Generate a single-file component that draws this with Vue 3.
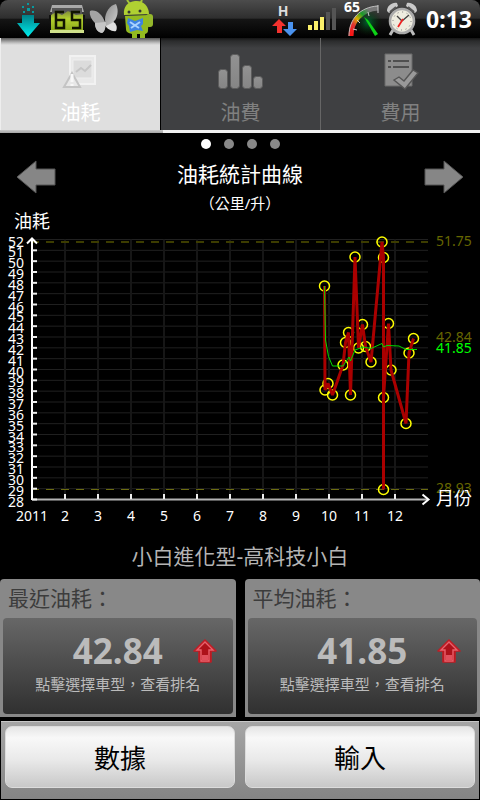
<script setup>
import { ref } from 'vue'

const tabs = [
  { id: 'usage', label: '油耗' },
  { id: 'fuelCost', label: '油費' },
  { id: 'cost', label: '費用' }
]
const activeTab = ref('usage')
const page = ref(0)

const axis = { left: 32, right: 428, top: 239.5, bottom: 499.5, min: 28, max: 52, monthWidth: 33 }
const yOf = (v) => axis.bottom - ((v - axis.min) * (axis.bottom - axis.top)) / (axis.max - axis.min)
const levels = Array.from({ length: 25 }, (_, i) => axis.max - i)
const months = Array.from({ length: 12 }, (_, i) => ({
  label: i === 0 ? '2011' : String(i + 1),
  x: axis.left + i * axis.monthWidth
}))

const samples = [
  [324.5, 286], [325, 390], [328, 383.5], [332.5, 395], [343, 365], [345.5, 342.5],
  [348.5, 332.5], [350.5, 395], [355, 257], [358.5, 348], [362.5, 324.5], [365.5, 346.5],
  [371, 362], [382, 242], [383.5, 257.5], [383.5, 489.5], [383.5, 397.5], [388.5, 323.5],
  [391, 370], [406, 423.5], [409, 353], [413.5, 338.5]
]
const averages = [
  [324.5, 286], [325.5, 340], [328.5, 356.5], [332.5, 366], [343, 366], [349, 357],
  [350.5, 361], [355, 350], [363, 347], [371, 348.5], [382, 343.5], [383.5, 347],
  [387, 345.5], [399, 346], [406, 349.5], [417, 349.5]
]
const toPoints = (list) => list.map((p) => p.join(',')).join(' ')

const cards = [
  { title: '最近油耗：', value: '42.84' },
  { title: '平均油耗：', value: '41.85' }
]
</script>

<template>
  <main class="app">
    <header class="status">
      <div class="status-left">
        <svg class="s-down" viewBox="0 0 24 36" width="24" height="36" aria-hidden="true">
          <defs>
            <linearGradient id="teal" x1="0" y1="0" x2="0" y2="1">
              <stop offset="0" stop-color="#008088" /><stop offset="1" stop-color="#00f0f0" />
            </linearGradient>
          </defs>
          <path fill="#079aa0" d="M11 2h2v2h-2zM6 5h2v2H6zM16 5h2v2h-2zM11 7h3v3h-3zM7 10h2v2H7zM16 10h2v2h-2z" />
          <path fill="url(#teal)" d="M6 14h12v8h6L12 36 1 22h5z" />
        </svg>
        <svg class="s-meter" viewBox="0 0 36 30" width="36" height="30" aria-hidden="true">
          <defs>
            <linearGradient id="meter" x1="0" y1="0" x2="0" y2="1">
              <stop offset="0" stop-color="#7e8b3a" /><stop offset=".4" stop-color="#b2cf2e" /><stop offset="1" stop-color="#8fae1c" />
            </linearGradient>
          </defs>
          <path d="M3 1h30l2 7H1z" fill="#a9a9a9" />
          <path d="M3 4h30v7H3z" fill="#555" />
          <path d="M2 11l5-3 6 3 6-4 8 4 7-1v16H2z" fill="url(#meter)" />
          <path d="M1 26h34v3H1z" fill="#cfe08a" />
          <path d="M0 11h2v6H0zM34 11h2v6h-2z" fill="#111" />
          <path d="M15 8H7v16h8v-8H7M31 8h-8v8h8v8h-8" fill="none" stroke="#101400" stroke-width="2.5" />
        </svg>
        <svg class="s-fly" viewBox="0 0 30 32" width="30" height="32" aria-hidden="true">
          <defs>
            <linearGradient id="wing" x1="0" y1="0" x2="1" y2="1">
              <stop offset="0" stop-color="#8a8a8a" /><stop offset="1" stop-color="#d0d0d0" />
            </linearGradient>
          </defs>
          <path d="M15 19l7-1c5 1 7 6 5 10-4 1-9-2-12-7z" fill="#e0e0e0" />
          <path d="M16 17C16 9 21 2 27 1c3 6 2 15-4 19l-6 3z" fill="url(#wing)" />
          <path d="M1 8c6-2 12 3 15 11 1 5 0 9-3 11-5-1-7-5-7-10C3 17 0 12 1 8z" fill="#a4a4a4" />
          <path d="M6 20l10-1c1 5 0 9-3 11-5-1-7-5-7-10z" fill="#c6c6c6" />
        </svg>
        <svg class="s-droid" viewBox="0 0 32 38" width="32" height="38" aria-hidden="true">
          <path d="M4 0l3 4M19 0l-2 4" stroke="#a4c639" stroke-width="2" />
          <path d="M1 15C0 6 5 2 12 1c8-1 14 5 14 13z" fill="#b0d032" />
          <circle cx="6" cy="12" r="1.5" fill="#333" /><circle cx="17" cy="11" r="1.5" fill="#333" />
          <rect x="23" y="14" width="7" height="13" rx="3" fill="#94b72b" />
          <path d="M2 16l24-1-1 15c0 3-1 3-3 4v4h-5v-4h-3v4H9v-4c-4-1-6-2-6-5z" fill="#93ba20" />
          <path d="M5 18l7 3 8-3v6l-2 2 2 5-6-1-7 2-1-6-2-3z" fill="#3f83e0" />
          <path d="M7 22l9 6M17 22l-9 6" stroke="#a9d2ff" stroke-width="2" />
        </svg>
      </div>
      <div class="status-right">
        <svg class="s-data" viewBox="0 0 26 34" width="26" height="34" aria-hidden="true">
          <text x="11" y="14" class="net">H</text>
          <path d="M7 17l7 7h-4v7H5v-7H0z" fill="#f3322e" />
          <path d="M18 34l7-7h-4v-7h-5v7h-5z" fill="#4a92ee" />
        </svg>
        <svg class="s-signal" viewBox="0 0 28 22" width="28" height="22" aria-hidden="true">
          <path d="M0 17h4v5H0zM6 13h4v9H6zM12 9h4v13h-4z" fill="#fbf06a" />
          <path d="M18 4h4v18h-4zM24 0h4v22h-4z" fill="#555" />
        </svg>
        <svg class="s-gauge" viewBox="0 0 36 38" width="36" height="38" aria-hidden="true">
          <defs>
            <linearGradient id="dial" x1="0" y1="1" x2="1" y2="0">
              <stop offset="0" stop-color="#f11" /><stop offset=".25" stop-color="#d33" />
              <stop offset=".42" stop-color="#d8b000" /><stop offset=".6" stop-color="#1a9a2a" />
              <stop offset=".8" stop-color="#777" />
            </linearGradient>
            <radialGradient id="glow"><stop offset="0" stop-color="#063" /><stop offset="1" stop-color="#062400" stop-opacity="0" /></radialGradient>
          </defs>
          <circle cx="24" cy="22" r="14" fill="url(#glow)" />
          <path d="M7 36C7 22 17 9 34 8" fill="none" stroke="url(#dial)" stroke-width="5" />
          <path d="M5 36C5 19 16 7 34 6" fill="none" stroke="#bbb" stroke-width="1" />
          <path d="M9 29l4 1M13 20l3 3M24 12l1 4M34 5v8" stroke="#ccc" stroke-width="1" />
          <path d="M20 17l4 3 10 14-3 2z" fill="#0dd317" />
          <text x="0" y="12" class="gauge-num">65</text>
        </svg>
        <svg class="s-clock" viewBox="0 0 32 34" width="32" height="34" aria-hidden="true">
          <path d="M7 28l-3 5M25 28l3 5" stroke="#bbb" stroke-width="3" />
          <path d="M1 9c0-5 5-9 10-8l1 3-9 7zM31 9c0-5-5-9-10-8l-1 3 9 7z" fill="#c9c9c9" />
          <path d="M10 5l-6 5M22 5l6 5" stroke="#555" stroke-width="2" />
          <circle cx="16" cy="19" r="12" fill="#eeecdf" stroke="#aaa" stroke-width="2.6" />
          <circle cx="16" cy="19" r="9" fill="none" stroke="#777" stroke-dasharray="1 3.7" />
          <path d="M16 19l7-6M16 19l-5-5" stroke="#444" stroke-width="1.4" />
          <path d="M17 17l-5 8" stroke="#e22" stroke-width="1.8" />
        </svg>
        <time class="clock">0:13</time>
      </div>
    </header>

    <nav class="tabs">
      <button
        v-for="tab in tabs"
        :key="tab.id"
        type="button"
        class="tab"
        :class="{ active: activeTab === tab.id }"
        @click="activeTab = tab.id"
      >
        <svg v-if="tab.id === 'usage'" class="tab-icon" viewBox="0 0 48 40" width="48" height="40" aria-hidden="true">
          <path d="M13 4h25v28H13z" fill="#e9e9e9" stroke="#f2f2f2" stroke-width="2" />
          <path d="M16 8h19v18H16z" fill="#dcdcdc" stroke="#eee" />
          <path d="M19 20l5-4 4 3 6-6" fill="none" stroke="#c6c6c6" stroke-width="2" />
          <path d="M7 35l8-14 8 14z" fill="#e8e8e8" stroke="#c4c4c4" stroke-width="2" />
          <path d="M15 22v8M15 32v2" stroke="#f8f8f8" stroke-width="3" />
        </svg>
        <svg v-else-if="tab.id === 'fuelCost'" class="tab-icon" viewBox="0 0 48 40" width="48" height="40" aria-hidden="true">
          <defs>
            <linearGradient id="bars" x1="0" y1="0" x2="0" y2="1">
              <stop offset="0" stop-color="#929292" /><stop offset="1" stop-color="#858585" />
            </linearGradient>
          </defs>
          <g fill="url(#bars)" stroke="#5c5c5c" stroke-width="1">
            <rect x="1.5" y="17.5" width="9" height="19" rx="3" />
            <rect x="13.5" y="2.5" width="9" height="34" rx="3" />
            <rect x="25.5" y="13.5" width="9" height="23" rx="3" />
            <rect x="36.5" y="24.5" width="9" height="12" rx="3" />
          </g>
        </svg>
        <svg v-else class="tab-icon" viewBox="0 0 48 40" width="48" height="40" aria-hidden="true">
          <path d="M8 2h27v32H8z" fill="#8c8c8c" stroke="#6a6a6a" />
          <path d="M11 9h3M16 9h16M11 15h3M16 15h16" stroke="#505050" stroke-width="2" />
          <path d="M17 28l5-3 5 4 9-11 5 3-13 16z" fill="#999" stroke="#555" stroke-width="1.4" />
        </svg>
        <span>{{ tab.label }}</span>
      </button>
    </nav>
    <div class="strip"><i></i></div>

    <div class="pager">
      <button
        v-for="n in 4"
        :key="n"
        type="button"
        class="dot"
        :class="{ on: page === n - 1 }"
        :aria-label="`${n}`"
        @click="page = n - 1"
      ></button>
    </div>

    <section class="heading">
      <button type="button" class="step" aria-label="‹">
        <svg viewBox="0 0 40 34" width="40" height="34"><path d="M1 17L20 1v8h19v16H20v8z" fill="#868686" stroke="#555" /></svg>
      </button>
      <div>
        <h1>油耗統計曲線</h1>
        <p>（公里/升）</p>
      </div>
      <button type="button" class="step" aria-label="›">
        <svg viewBox="0 0 40 34" width="40" height="34"><path d="M39 17L20 1v8H1v16h19v8z" fill="#868686" stroke="#555" /></svg>
      </button>
    </section>

    <svg class="chart" viewBox="0 205 480 325" role="img" aria-label="油耗統計曲線">
      <g class="grid-h">
        <line v-for="v in levels.slice(0, -1)" :key="v" :x1="axis.left" :x2="axis.right" :y1="yOf(v)" :y2="yOf(v)" />
      </g>
      <g class="grid-v">
        <line v-for="m in months.slice(1)" :key="m.label" :x1="m.x" :x2="m.x" :y1="axis.top" :y2="axis.bottom" />
      </g>
      <line class="limit high" x1="31" x2="428" y1="242" y2="242" />
      <line class="limit" x1="31" x2="428" y1="489.5" y2="489.5" />

      <line class="x-axis" :x1="axis.left" x2="428" y1="499.5" y2="499.5" />
      <path class="axis-tip" d="M422.5 494.5l6 5-6 5" />
      <line class="y-axis" x1="32" x2="32" y1="239" y2="500" />
      <path class="axis-tip" d="M27 243.5l5-5 5 5" />
      <g class="ticks">
        <line v-for="v in levels.slice(1)" :key="v" x1="32" x2="37" :y1="yOf(v)" :y2="yOf(v)" />
        <line v-for="m in months.slice(1)" :key="m.label" :x1="m.x" :x2="m.x" y1="494" y2="499" />
      </g>

      <text v-for="v in levels" :key="v" class="num" text-anchor="end" x="24" :y="yOf(v) + 7">{{ v }}</text>
      <text v-for="m in months" :key="m.label" class="num" text-anchor="middle" :x="m.x" y="521">{{ m.label }}</text>

      <circle v-for="(p, i) in samples" :key="i" class="mark" :cx="p[0]" :cy="p[1]" r="5" />
      <polyline class="usage" :points="toPoints(samples)" />
      <polyline class="average" :points="toPoints(averages)" />

      <text class="num olive" x="436" y="246">51.75</text>
      <text class="num olive" x="436" y="342">42.84</text>
      <text class="num lime" x="436" y="353">41.85</text>
      <text class="num olive" x="436" y="493">28.93</text>
      <text class="axis-name" x="14" y="228">油耗</text>
      <text class="axis-name" x="436" y="505">月份</text>
    </svg>

    <h2 class="car">小白進化型-高科技小白</h2>

    <section class="cards">
      <article v-for="card in cards" :key="card.title" class="card">
        <h3>{{ card.title }}</h3>
        <button type="button" class="panel">
          <span class="reading">
            <strong>{{ card.value }}</strong>
            <svg viewBox="0 0 24 24" width="24" height="24" aria-hidden="true">
              <path d="M12 1l11 11h-5v11H6V12H1z" fill="#b3121c" stroke="#c01c24" stroke-width="1.6" stroke-linejoin="round" />
              <path d="M12 3l8 8h-4v11H8V11H4z" fill="#ad121a" stroke="#e8626c" stroke-width="1.4" />
              <path d="M9 16h6v5H9z" fill="#e0505c" />
            </svg>
          </span>
          <span class="hint">點擊選擇車型，查看排名</span>
        </button>
      </article>
    </section>

    <footer class="actions">
      <button type="button">數據</button>
      <button type="button">輸入</button>
    </footer>
  </main>
</template>

<style>
body {
  background: #000;
}
</style>

<style scoped>
.app {
  background: #000;
  color: #fff;
  font-family: 'Noto Sans', 'Noto Sans CJK TC', sans-serif;
}
button {
  margin: 0;
  padding: 0;
  border: 0;
  background: none;
  color: inherit;
  font: inherit;
}
svg {
  display: block;
  overflow: visible;
}
h1, h2, h3, p {
  margin: 0;
  font-weight: 400;
}

.status {
  display: flex;
  justify-content: space-between;
  height: 38px;
  padding: 0 8px 0 16px;
  border-radius: 8px 8px 0 0;
  background: linear-gradient(#4c4c4c, #2e2e2e 48%, #151515 50%, #000);
}
.status-left, .status-right {
  display: flex;
  align-items: center;
}
.status-left { gap: 4px; }
.s-down { margin-right: 5px; }
.status-right { gap: 8px; }
.s-signal { margin-left: 2px; }
.s-clock { margin-left: -2px; }
.net { fill: #ddd; font-size: 14px; font-weight: 700; text-anchor: middle; }
.gauge-num { fill: #fff; font-size: 14px; font-weight: 700; }
.clock { font-size: 23px; line-height: 38px; font-weight: 700; }

.tabs {
  display: grid;
  grid-template-columns: repeat(3, 1fr);
}
.tab {
  display: flex;
  flex-direction: column;
  align-items: center;
  height: 92px;
  padding-top: 14px;
  border-left: 1px solid #666;
  background: linear-gradient(#151515, #2b2c2d 3px, #3f4042 10px);
  color: #808080;
  font-size: 20px;
  line-height: 28px;
}
.tab span { margin-top: 7px; }
.tab.active {
  border-left-color: #eee;
  background: linear-gradient(#555, #999 3px, #c2c2c2 5px, #dfdfdf 7px);
  color: #fff;
}
.tab.active + .tab { border-left-color: #000; }
.strip {
  height: 3px;
  background: #f2f2f2;
}
.strip i {
  display: block;
  width: 34%;
  height: 3px;
  background: linear-gradient(#c8c8c8, #a5a5a5);
}

.pager {
  display: flex;
  justify-content: center;
  gap: 13px;
  padding: 6px 0 11px;
}
.dot {
  width: 10px;
  height: 10px;
  border-radius: 50%;
  background: #888;
}
.dot.on { background: #fff; }

.heading {
  display: flex;
  justify-content: space-between;
  align-items: flex-start;
  height: 45px;
  padding: 0 16px;
  text-align: center;
}
.heading h1 { font-size: 21px; line-height: 28px; }
.heading p { font-size: 15px; line-height: 30px; }

.chart {
  width: 100%;
  height: auto;
}
.grid-h line { stroke: #202020; }
.grid-v line { stroke: #161616; stroke-width: 2; }
.limit { stroke: #6c6c10; stroke-dasharray: 8 7; }
.limit.high { stroke: #3c3c00; stroke-width: 2; }
.x-axis { stroke: #b4b4b4; stroke-width: 2; }
.y-axis { stroke: #fff; stroke-width: 2; }
.axis-tip { fill: none; stroke: #fff; stroke-width: 2; }
.ticks line { stroke: #eee; stroke-width: 2; }
.num { fill: #fff; font-size: 14px; }
.olive { fill: #666600; }
.lime { fill: #00ff00; }
.axis-name { fill: #fff; font-size: 18px; }
.mark { fill: none; stroke: #ffff00; stroke-width: 1.5; }
.usage { fill: none; stroke: #aa0000; stroke-width: 3; stroke-linejoin: bevel; }
.average { fill: none; stroke: #00dd00; stroke-width: 1; }

.car {
  padding: 12px 0 8px;
  color: #b4b4b4;
  font-size: 21px;
  line-height: 29px;
  text-align: center;
}

.cards {
  display: grid;
  grid-template-columns: 1fr 1fr;
  gap: 9px;
}
.card {
  padding: 0 3px 3px;
  border-radius: 4px 4px 0 0;
  background: #888;
}
.card h3 {
  padding: 4px 5px;
  color: #3c3c3c;
  font-size: 21px;
  line-height: 31px;
}
.panel {
  display: block;
  width: 100%;
  height: 96px;
  padding-bottom: 4px;
  border-radius: 4px;
  background: linear-gradient(#676767, #303030);
  color: #bbb;
}
.reading {
  display: grid;
  grid-template-columns: 1fr auto 1fr;
  align-items: center;
}
.reading strong {
  grid-column: 2;
  font-size: 35px;
  line-height: 40px;
}
.reading svg { margin-left: 30px; }
.hint {
  display: block;
  font-size: 15px;
  line-height: 26px;
}

.actions {
  display: grid;
  grid-template-columns: 1fr 1fr;
  gap: 10px;
  margin: 4px 1px 1px;
  padding: 4px 4px 11px;
  border-top: 1px solid #c8c8c8;
  background: linear-gradient(#a6a6a6, #848484);
}
.actions button {
  height: 62px;
  border: 1px solid #dcdcdc;
  border-radius: 7px;
  background: linear-gradient(#e6e6e6, #f8f8f8 18%, #e9e9e9 55%, #c8c8c8);
  color: #000;
  font-size: 26px;
}
</style>
